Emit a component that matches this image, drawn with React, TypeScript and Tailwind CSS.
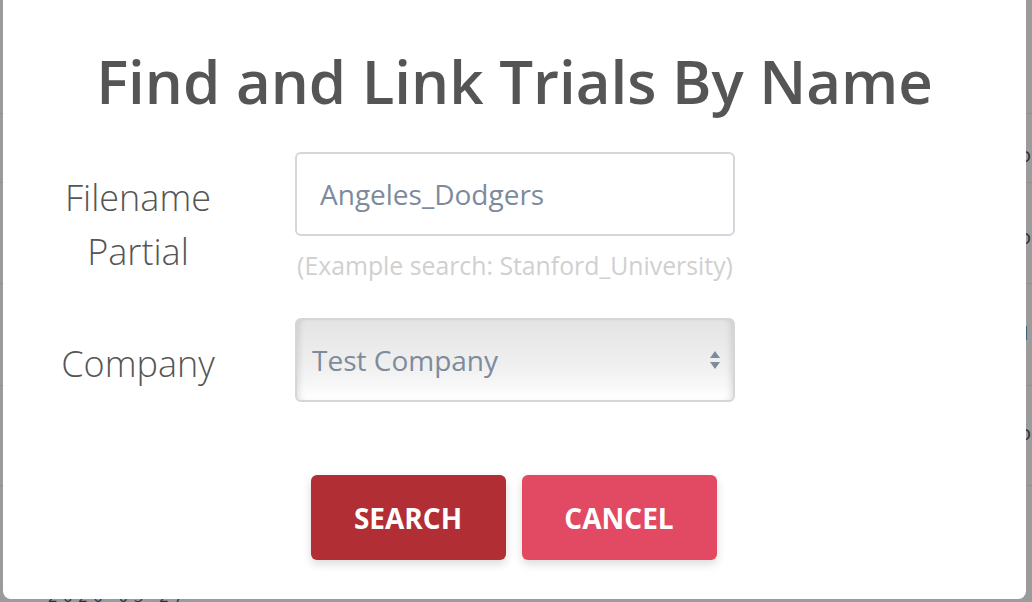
const rowEdges = [113, 182, 283, 385, 485];

const Backdrop = () => (
  <div className="absolute inset-0 bg-[#9b9b9b]">
    {rowEdges.map((y) => (
      <div key={y} className="absolute left-0 right-0 h-px bg-[#8f8f8f]" style={{ top: y }} />
    ))}
    <div className="absolute right-[1px] top-[140px] text-[20px] text-[#2a2f3a]">Co</div>
    <div className="absolute right-[1px] top-[222px] text-[20px] text-[#2a2f3a]">Do</div>
    <div className="absolute right-[1px] top-[318px] text-[20px] text-[#2a2f3a]">01</div>
    <div className="absolute right-[1px] top-[418px] text-[20px] text-[#2a2f3a]">Do</div>
    <div className="absolute left-[48px] top-[590px] text-[16px] leading-[12px] tracking-[6px] text-[#2a2f3a]">
      2020 03 27
    </div>
  </div>
);

const SelectArrows = () => (
  <svg width="12" height="24" viewBox="0 0 12 24" className="shrink-0">
    <path d="M6 3 L11 10 L1 10 Z" fill="#7d8b9c" />
    <path d="M1 14 L11 14 L6 21 Z" fill="#7d8b9c" />
  </svg>
);

export default function App() {
  return (
    <div
      className="relative h-[602px] w-[1032px] overflow-hidden"
      style={{ fontFamily: '"Open Sans", "Noto Sans", sans-serif' }}
    >
      <Backdrop />
      <div className="absolute left-[3px] top-[-10px] h-[609px] w-[1023px] rounded-[8px] bg-white">
        <h1 className="mt-[56px] text-center text-[60px] font-semibold leading-[70px] text-[#555555]">
          Find and Link Trials By Name
        </h1>

        <div className="mt-[36px] flex items-center">
          <div className="w-[270px] pt-[16px] text-center text-[36px] font-light leading-[54px] text-[#555555]">
            Filename
            <br />
            Partial
          </div>
          <div className="ml-[22px] w-[440px]">
            <div className="flex h-[84px] items-center rounded-[6px] border-2 border-[#d3d6db] px-[23px] text-[28px] text-[#7d8b9c]">
              Angeles_Dodgers
            </div>
            <div className="mt-[12px] whitespace-nowrap text-center text-[24.8px] leading-[34px] text-[#d0d0d0]">
              (Example search: Stanford_University)
            </div>
          </div>
        </div>

        <div className="mt-[36px] flex items-center">
          <div className="w-[270px] pt-[8px] text-center text-[36px] font-light leading-[54px] text-[#555555]">
            Company
          </div>
          <div
            className="ml-[22px] flex h-[84px] w-[440px] items-center justify-between rounded-[6px] border-2 border-[#d3d6db] pl-[15px] pr-[12px] text-[28px] text-[#7d8b9c]"
            style={{
              background: 'linear-gradient(to bottom, #e4e4e4 0%, #f0f0f0 60%, #ffffff 100%)',
              boxShadow: 'inset 6px 0 6px -4px rgba(0,0,0,0.12), inset -6px 0 6px -4px rgba(0,0,0,0.12)',
            }}
          >
            <span>Test Company</span>
            <SelectArrows />
          </div>
        </div>

        <div className="mt-[73px] flex justify-center gap-[16px] pr-[2px]">
          <button className="h-[85px] w-[195px] rounded-[6px] bg-[#b02e34] text-[28px] font-bold text-white shadow-[0_4px_10px_rgba(0,0,0,0.15)]">
            SEARCH
          </button>
          <button className="h-[85px] w-[195px] rounded-[6px] bg-[#e14a62] text-[28px] font-bold text-white shadow-[0_4px_10px_rgba(0,0,0,0.15)]">
            CANCEL
          </button>
        </div>
      </div>
    </div>
  );
}
